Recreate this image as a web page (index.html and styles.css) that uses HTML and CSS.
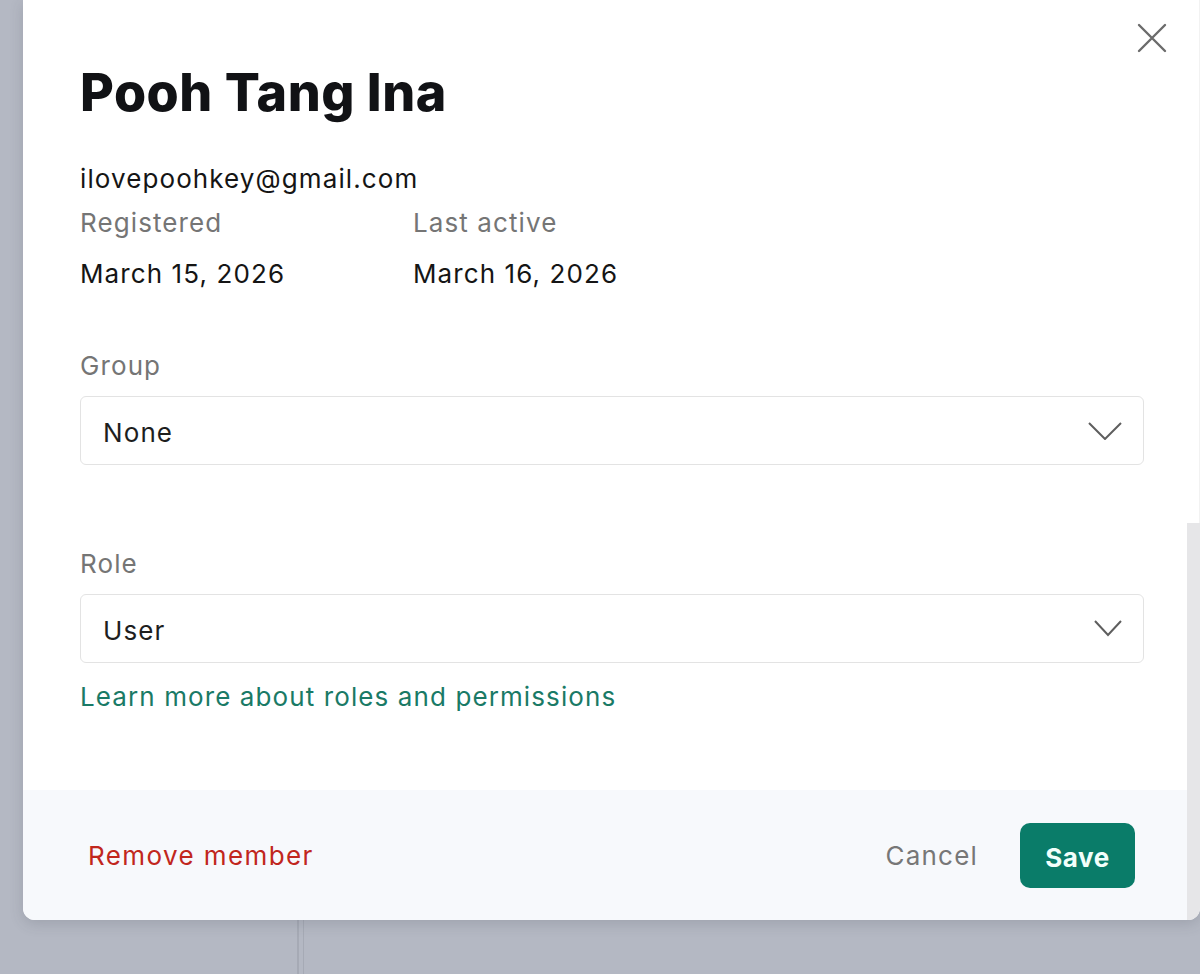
FILE: index.html
```html
<!DOCTYPE html>
<html lang="en">
<head>
    <meta charset="UTF-8">
    <meta name="viewport" content="width=device-width, initial-scale=1.0">
    <title>Member details</title>
    <link rel="stylesheet" href="styles.css">
</head>
<body>
    <div class="overlay">
        <div class="modal">
            <div class="modal-main">
                <button class="close" type="button" aria-label="Close">
                    <svg width="30" height="30" viewBox="0 0 30 30"><path d="M2 2 L28 28 M28 2 L2 28" stroke="#6b6b6b" stroke-width="2.4" fill="none" stroke-linecap="round"/></svg>
                </button>
                <div class="modal-body">
                    <h1 class="name">Pooh Tang Ina</h1>
                    <div class="email">ilovepoohkey@gmail.com</div>
                    <div class="dates">
                        <div class="date-col">
                            <div class="muted">Registered</div>
                            <div class="date">March 15, 2026</div>
                        </div>
                        <div class="date-col">
                            <div class="muted">Last active</div>
                            <div class="date">March 16, 2026</div>
                        </div>
                    </div>

                    <label class="field-label group-label">Group</label>
                    <div class="select">
                        <span>None</span>
                        <svg width="34" height="18" viewBox="0 0 34 18"><path d="M1 1 L17 17 L33 1" stroke="#5e5e5e" stroke-width="2" fill="none"/></svg>
                    </div>

                    <label class="field-label role-label">Role</label>
                    <div class="select">
                        <span>User</span>
                        <svg width="28" height="17" viewBox="0 0 28 17"><path d="M1 1 L14 15 L27 1" stroke="#5e5e5e" stroke-width="2" fill="none"/></svg>
                    </div>
                    <a class="learn" href="#">Learn more about roles and permissions</a>
                </div>
                <div class="modal-footer">
                    <a class="remove" href="#">Remove member</a>
                    <div class="actions">
                        <button class="cancel" type="button">Cancel</button>
                        <button class="save" type="button">Save</button>
                    </div>
                </div>
            </div>
            <div class="scrollbar">
                <div class="track"></div>
                <div class="thumb"></div>
            </div>
        </div>
    </div>
</body>
</html>
```

FILE: styles.css
```css
body {
    margin: 0;
    font-family: Inter, "Noto Sans", sans-serif;
    color: #151515;
    height: 974px;
    overflow: hidden;
    background:
        linear-gradient(90deg, transparent 297px, #a6aab5 297px, #a6aab5 299px, transparent 299px, transparent 303px, #a6aab5 303px, #a6aab5 304px, transparent 304px),
        #b4b8c3;
}
.overlay { padding-left: 23px; }
.modal {
    display: flex;
    width: 1177px;
    height: 920px;
    background: #fff;
    border-radius: 0 0 12px 12px;
    overflow: hidden;
    box-shadow: 0 4px 14px rgba(60, 64, 80, 0.18);
}
.modal-main { flex: 1; display: flex; flex-direction: column; position: relative; }
.close { position: absolute; top: 23px; right: 20px; border: 0; background: none; padding: 0; cursor: pointer; }

.modal-body { flex: 1; display: flex; flex-direction: column; padding: 0 43px 0 57px; font-size: 26px; letter-spacing: 1.1px; }
.name { margin: 63px 0 0; font-size: 52px; line-height: 60px; font-weight: 800; letter-spacing: 0.5px; color: #111215; }
.email { margin-top: 40px; line-height: 32px; }
.dates { display: flex; margin-top: 12px; }
.date-col { width: 333px; }
.muted { line-height: 32px; color: #757575; }
.date { margin-top: 19px; line-height: 32px; }

.field-label { display: block; line-height: 32px; color: #757575; }
.group-label { margin-top: 60px; }
.role-label { margin-top: 83px; }
.select {
    margin-top: 14px;
    box-sizing: border-box;
    height: 69px;
    border: 1px solid #e3e3e3;
    border-radius: 6px;
    display: flex;
    align-items: center;
    justify-content: space-between;
    padding: 4px 21px 0 22px;
    color: #1e1e1e;
}
.select svg { margin-top: -4px; }
.learn { margin-top: 18px; line-height: 32px; color: #1a7a66; text-decoration: none; }

.modal-footer {
    height: 130px;
    background: #f7f9fc;
    display: flex;
    align-items: center;
    justify-content: space-between;
    padding: 0 52px 0 65px;
    font-size: 26px;
    letter-spacing: 1.1px;
}
.remove { color: #c1271d; text-decoration: none; letter-spacing: 1.4px; }
.actions { display: flex; align-items: center; gap: 42px; }
.cancel { border: 0; background: none; font-family: inherit; font-size: 26px; letter-spacing: 1.2px; color: #777; padding: 0; }
.save {
    width: 115px;
    height: 65px;
    border: 0;
    border-radius: 10px;
    background: #0a7c69;
    color: #f2fffb;
    font-family: inherit;
    font-size: 26px;
    letter-spacing: 0.6px;
    font-weight: 700;
    padding-top: 5px;
}

.scrollbar { width: 13px; display: flex; flex-direction: column; }
.track { height: 523px; background: #fff; border-right: 1px solid #f2f2f2; }
.thumb { flex: 1; background: #e6e6e8; }
```
